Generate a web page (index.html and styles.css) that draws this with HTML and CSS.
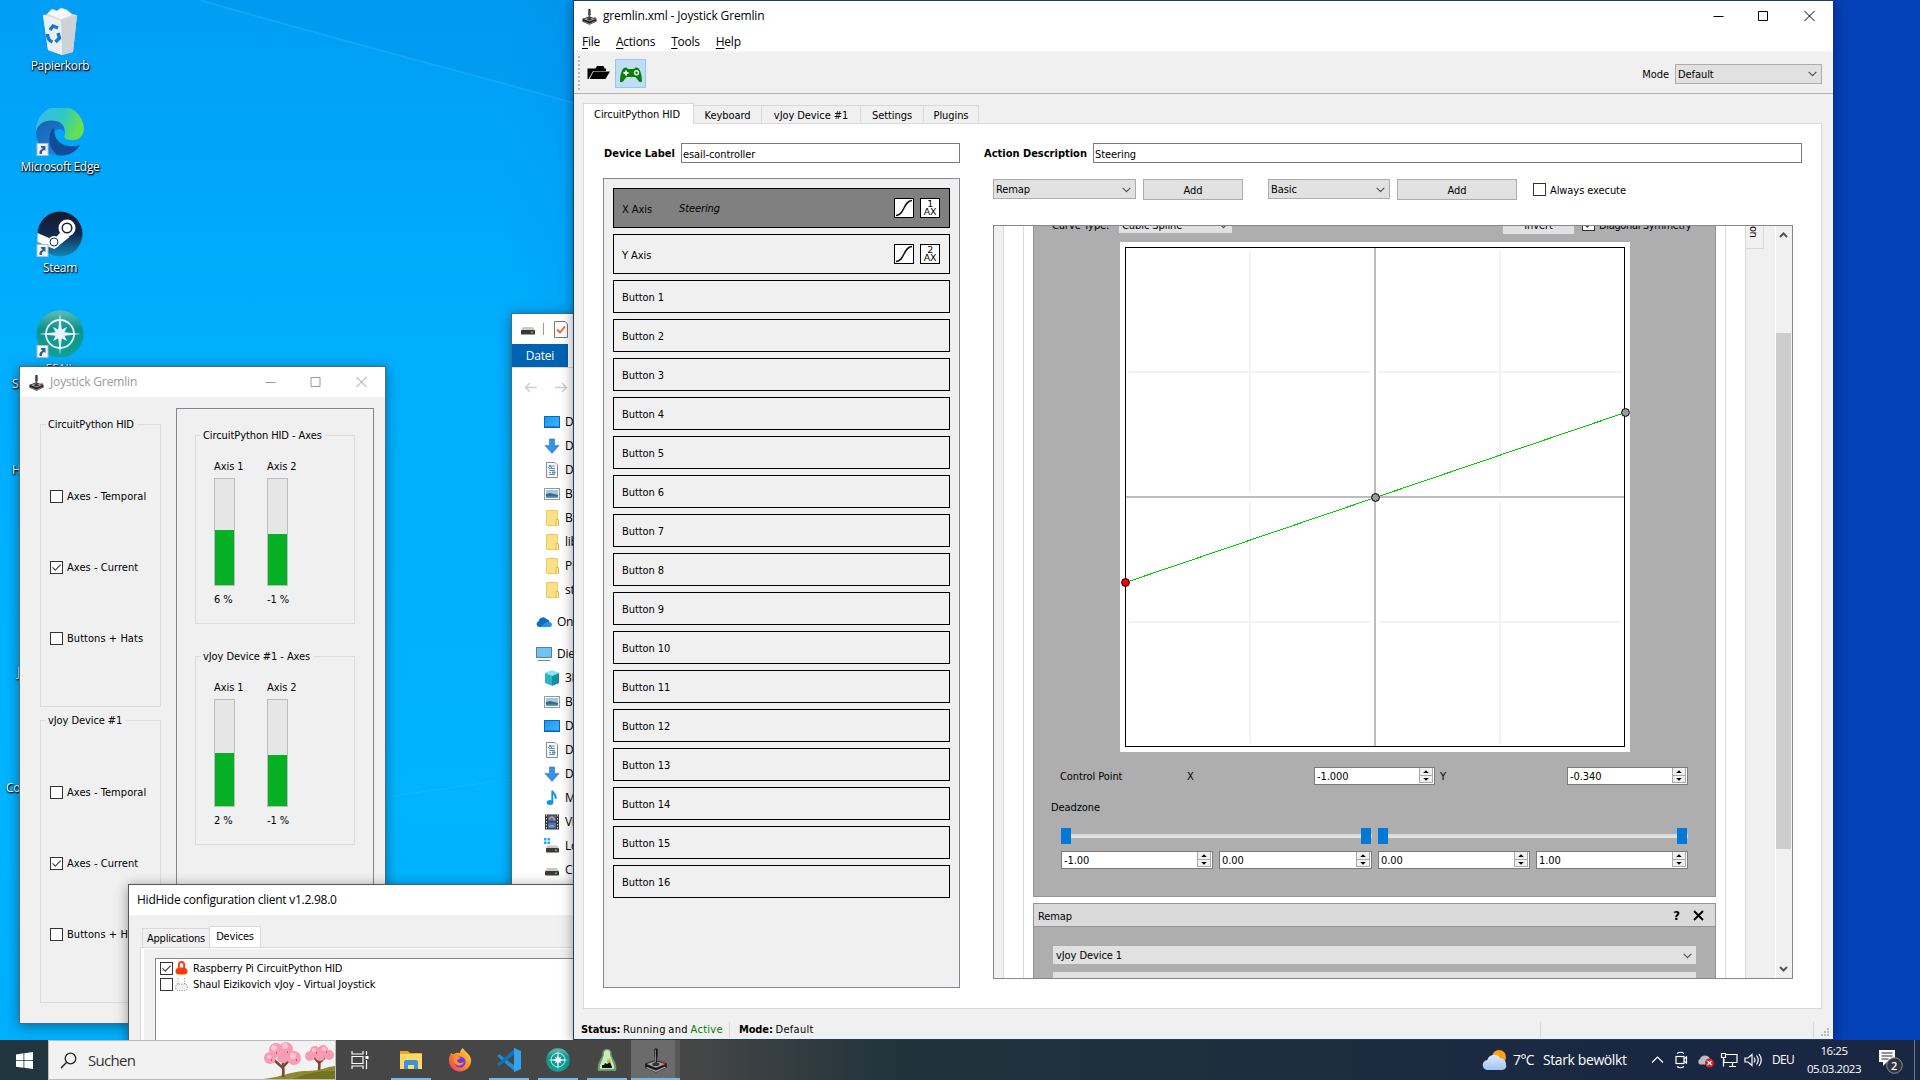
FILE: index.html
```html
<!DOCTYPE html>
<html lang="de">
<head>
<meta charset="utf-8">
<title>Desktop</title>
<link rel="stylesheet" href="styles.css">
</head>
<body>
<svg class="defs" width="0" height="0">
  <defs>
    <linearGradient id="g-steam" x1="0" y1="0" x2="0" y2="1"><stop offset="0" stop-color="#151a2c"/><stop offset=".5" stop-color="#10294f"/><stop offset="1" stop-color="#1387b8"/></linearGradient>
    <linearGradient id="g-edge1" x1="0" y1="0" x2="1" y2=".3"><stop offset="0" stop-color="#37b8f2"/><stop offset=".6" stop-color="#2fc8c4"/><stop offset="1" stop-color="#67e04f"/></linearGradient>
    <linearGradient id="g-edge2" x1="0" y1="0" x2=".6" y2="1"><stop offset="0" stop-color="#1b5fae"/><stop offset="1" stop-color="#1a86dc"/></linearGradient>
    <linearGradient id="g-esail" x1="0" y1="0" x2="0" y2="1"><stop offset="0" stop-color="#5fbcb4"/><stop offset=".4" stop-color="#0b938a"/><stop offset="1" stop-color="#11a296"/></linearGradient>
    <linearGradient id="g-fox" x1="1" y1="0" x2="0" y2="1"><stop offset="0" stop-color="#ffe14a"/><stop offset=".5" stop-color="#ff8a2a"/><stop offset="1" stop-color="#f0306a"/></linearGradient>
    <linearGradient id="g-screen" x1="0" y1="0" x2="1" y2="1"><stop offset="0" stop-color="#0f9af2"/><stop offset="1" stop-color="#46b4ff"/></linearGradient>
    <linearGradient id="g-cloud" x1="0" y1="0" x2="0" y2="1"><stop offset="0" stop-color="#dfeafc"/><stop offset="1" stop-color="#9fc3f3"/></linearGradient>
    <symbol id="joystick" viewBox="0 0 16 18"><path d="M.5 11.500L7.500 9l8 2.500v2.700L8 17.700.5 14.500z" fill="#1c1c1c"/><path d="M1.500 11.700l6-2 7 2-6.500 2.600z" fill="#a2a2a2"/><path d="M1.500 14.200L8 16.800l6.500-2.900" stroke="#b4b4b4" fill="none" stroke-width=".8"/><rect x="6.700" y="1" width="2.400" height="6.500" rx=".9" fill="#111"/><rect x="7" y="6" width="1.800" height="6" fill="#222"/><path d="M7.500 1.800v9" stroke="#b0b0b0" stroke-width=".6"/><ellipse cx="7.900" cy="12" rx="2.500" ry="1.200" fill="#333"/><path d="M12.500 9.800h2v1.600h-2z" fill="#d22"/></symbol>
    <symbol id="link" viewBox="0 0 12 13"><rect x=".5" y=".5" width="11" height="12" fill="#f4f6f8" stroke="#b4bcc4"/><path d="M3 11c-.4-3 .8-4.500 3-5.200L4.500 4.300 4.300 3H9v5L7.600 7C6 7.500 5.300 8.800 5.500 11z" fill="#2b5fa8"/></symbol>
    <symbol id="esail" viewBox="0 0 48 48"><circle cx="24" cy="24" r="23.500" fill="url(#g-esail)"/><circle cx="24" cy="24" r="14" fill="none" stroke="#e8f2fa" stroke-width="1.800"/><path d="M24 3l1.800 16.500L31 17l-2.500 5.200L45 24l-16.500 1.800L31 31l-5.200-2.500L24 45l-1.800-16.500L17 31l2.500-5.200L3 24l16.500-1.800L17 17l5.200 2.500z" fill="#e8f2fa"/></symbol>
    <symbol id="chev" viewBox="0 0 9 6"><path d="M.7.8L4.500 4.600 8.300.8" fill="none" stroke="#555" stroke-width="1.200"/></symbol>
    <symbol id="tick" viewBox="0 0 13 13"><path d="M2.500 6.300l2.800 2.900 5.300-5.600" fill="none" stroke="#444" stroke-width="1.200"/></symbol>
    <symbol id="curve" viewBox="0 0 20 20"><rect x=".5" y=".5" width="19" height="19" fill="#fff" stroke="#000"/><path d="M2 17.500C11 17 9 3 18 2.500" fill="none" stroke="#111" stroke-width="1.500"/></symbol>
    <symbol id="arrows" viewBox="0 0 14 15"><rect width="14" height="15" fill="#f0f0f0"/><path d="M.5 0v15M13.500 0v15M0 7.500h14M0 14.500h14" stroke="#a9a9a9" fill="none"/><path d="M4.200 5L7 2.200 9.800 5zM4.200 10L7 12.800 9.800 10z" fill="#000"/></symbol>
    <symbol id="i-desk" viewBox="0 0 16 16"><rect x=".5" y="2.500" width="15" height="11" fill="url(#g-screen)" stroke="#0a6cb8"/><path d="M1 13h14" stroke="#0a5a9c"/></symbol>
    <symbol id="i-down" viewBox="0 0 16 16"><path d="M5.500 1h5v6.500H15L8 15.500 1 7.500h4.500z" fill="#3690e6" stroke="#2a78c8" stroke-width=".6"/></symbol>
    <symbol id="i-doc" viewBox="0 0 16 16"><path d="M2.500.5H11l2.500 2.500v12.500h-11z" fill="#fff" stroke="#8c8c8c"/><path d="M7 4h4M5 6.500h6M5 8.500h6M5 10.500h2M5 12.500h6" stroke="#6d8fa8"/><path d="M4.500 6l1.500-3 1.500 3" stroke="#1686c8" fill="none"/><rect x="8" y="9.500" width="3.500" height="2" fill="#2c98d8"/></symbol>
    <symbol id="i-pic" viewBox="0 0 16 16"><rect x=".5" y="2.500" width="15" height="11" fill="#fff" stroke="#8e9aa2"/><rect x="2" y="4" width="12" height="8" fill="#9cc8ee"/><path d="M2 8l4-1 8 2v3H2z" fill="#3b6d70"/><path d="M2 10.500h12V12H2z" fill="#5f9ad0"/></symbol>
    <symbol id="i-fold" viewBox="0 0 16 16"><path d="M2.500.5h11v15h-11z" fill="#fbe08a" stroke="#eccb58"/><path d="M12 9.500h2.500v6H12z" fill="#fbe9a8" stroke="#e6c04a"/></symbol>
    <symbol id="i-one" viewBox="0 0 16 16"><path d="M3 13a3 3 0 0 1-.4-5.800A4.500 4.500 0 0 1 10.500 5a3.500 3.500 0 0 1 3 3A2.600 2.600 0 0 1 13.500 13z" fill="#0f6cc4"/><path d="M4 13l6-4.500c3-1 6 0 5.900 2.300A2.300 2.300 0 0 1 13.500 13z" fill="#2196e8"/></symbol>
    <symbol id="i-pc" viewBox="0 0 16 16"><rect x=".5" y="1.500" width="15" height="10" fill="#6cc4f8" stroke="#5c7c90"/><path d="M1.500 14.500h13" stroke="#7c96a6" stroke-width="1.200"/></symbol>
    <symbol id="i-3d" viewBox="0 0 16 16"><path d="M1 3l7-2.500L15 3v10l-7 2.700L1 13z" fill="#2bb4c8"/><path d="M8 6.500L15 3v10l-7 2.700z" fill="#158da4"/><path d="M1 3l7-2.500L15 3 8 6z" fill="#8fe4ee"/></symbol>
    <symbol id="i-mus" viewBox="0 0 16 16"><ellipse cx="6" cy="12.500" rx="3.300" ry="2.500" fill="#1592e8"/><path d="M8.300 12.500V.8c.6 3 4.600 3.400 3.200 8" stroke="#1592e8" stroke-width="1.900" fill="none"/></symbol>
    <symbol id="i-vid" viewBox="0 0 16 16"><rect x="1" y=".5" width="14" height="15" fill="#333"/><path d="M2.500 1v15M13.500 1v15" stroke="#ddd" stroke-dasharray="1.500 1.500"/><rect x="4" y="1.500" width="8" height="6" fill="#4868c0"/><rect x="4" y="8.500" width="8" height="6" fill="#3a78c8"/><path d="M5 5l3-2 3 3M5 12h5" stroke="#e8a020" stroke-width="1.500" fill="none"/></symbol>
    <symbol id="i-drv" viewBox="0 0 16 16"><path d="M3 6h10l2 3.500H1z" fill="#c9c9c9"/><rect x="1" y="9" width="14" height="4.500" rx=".8" fill="#3a3a3a"/><rect x="11" y="10.500" width="2" height="1.500" fill="#3ad04a"/></symbol>
    <symbol id="i-win" viewBox="0 0 16 16"><path d="M0 0h2.500v2.500H0zM3.500 0H6v2.500H3.500zM0 3.500h2.500V6H0zM3.500 3.500H6V6H3.500z" fill="#18b0f0"/><path d="M3 7.500h10l2 3H2z" fill="#c9c9c9"/><rect x="2" y="10" width="13" height="4.500" rx=".8" fill="#3a3a3a"/><rect x="11" y="11.500" width="2" height="1.500" fill="#3ad04a"/></symbol>
  </defs>
</svg>
<div class="desktop">
  <svg class="wallray" width="1920" height="1080" viewBox="0 0 1920 1080"><path d="M200 0L574 103V0z" fill="#0078dc" opacity=".13"/><path d="M200 0C330 38 450 68 574 103" stroke="#3cb8ff" stroke-width="2" opacity=".3" fill="none"/><path d="M385 797L512 779" stroke="#4cd0ff" opacity=".2"/></svg>

  <div class="dicon d1"><svg width="48" height="48" viewBox="0 0 48 48"><path d="M7 8l17-3 17 3-4 37-11 3-14-5z" fill="#dfe4e8"/><path d="M25 13l16-5-4 37-11 3z" fill="#cdd2d6"/><path d="M7 8l18 5 1 35-14-5z" fill="#eceff1"/><path d="M11 7l5-5 5 2 4-3 6 2 6 5-12 5z" fill="#f8f8f8" stroke="#c8c8c8" stroke-width=".7"/><path d="M14 23l3-4 5 2M11.500 27c0 4 2 7 5 8M22 26l1.500 5-4 4" stroke="#1478cc" stroke-width="3.400" fill="none"/></svg><span>Papierkorb</span></div>
  <div class="dicon d2"><svg width="48" height="48" viewBox="0 0 48 48"><path d="M0 24A24 24 0 0 1 48 20c0 8-5 12-11 12-7 0-10-2-8-6C31 15 14 9 0 24z" fill="url(#g-edge1)"/><path d="M0 24C2 14 12 11 20 13c8 2 9 8 8 10-7-5-12 1-11 7 1 9 8 17 13 17A24 24 0 0 1 0 24z" fill="url(#g-edge2)"/><path d="M17 20c-6 8-5 19 4 27 10 2 19-3 23-10-8 3-20 1-24-7-2-4-1-8-3-10z" fill="#114c96"/><use href="#link" x="0" y="35" width="13" height="13"/></svg><span>Microsoft Edge</span></div>
  <div class="dicon d3"><svg width="48" height="48" viewBox="0 0 48 48"><circle cx="24" cy="25" r="22.500" fill="url(#g-steam)"/><path d="M1.500 24l16 7 9-10 7 7-10 8-5 4-8-3-9-4z" fill="#fff"/><circle cx="31" cy="19" r="8.500" fill="#fff"/><circle cx="31" cy="19" r="5.500" fill="#12213f"/><circle cx="31" cy="19" r="4" fill="#fff"/><circle cx="18" cy="33" r="6" fill="#fff"/><circle cx="18" cy="33" r="4" fill="none" stroke="#12305f"/><use href="#link" x="0" y="35" width="13" height="13"/></svg><span>Steam</span></div>
  <div class="dicon d4"><svg width="48" height="48" viewBox="0 0 48 48"><use href="#esail" width="48" height="48"/><use href="#link" x="0" y="35" width="13" height="13"/></svg><span>ESAIL</span></div>
  <span class="dlabel l1">St</span><span class="dlabel l2">Hid</span><span class="dlabel l3">Joy</span><span class="dlabel l4">Control</span>

  <section class="win monitor">
    <header class="title muted"><svg width="15" height="17"><use href="#joystick"/></svg><span>Joystick Gremlin</span>
      <svg class="wbtn" width="102" height="12" viewBox="0 0 102 12"><path d="M.5 6.500h10M46 1.500h9v9h-9zM91.500 1l10 10M101.500 1l-10 10" fill="none" stroke="#999"/></svg></header>
    <div class="monbody">
      <div class="moncol">
        <fieldset class="grp"><legend>CircuitPython HID</legend>
          <label><i class="cb"></i>Axes - Temporal</label><label><i class="cb"><svg><use href="#tick"/></svg></i>Axes - Current</label><label><i class="cb"></i>Buttons + Hats</label></fieldset>
        <fieldset class="grp"><legend>vJoy Device #1</legend>
          <label><i class="cb"></i>Axes - Temporal</label><label><i class="cb"><svg><use href="#tick"/></svg></i>Axes - Current</label><label><i class="cb"></i>Buttons + Hats</label></fieldset>
      </div>
      <div class="monframe">
        <fieldset class="axgrp"><legend>CircuitPython HID - Axes</legend><div class="axes">
          <div class="ax"><span>Axis 1</span><div class="bar"><b style="height:55px"></b></div><span>6 %</span></div>
          <div class="ax"><span>Axis 2</span><div class="bar"><b style="height:51px"></b></div><span>-1 %</span></div></div></fieldset>
        <fieldset class="axgrp"><legend>vJoy Device #1 - Axes</legend><div class="axes">
          <div class="ax"><span>Axis 1</span><div class="bar"><b style="height:53px"></b></div><span>2 %</span></div>
          <div class="ax"><span>Axis 2</span><div class="bar"><b style="height:51px"></b></div><span>-1 %</span></div></div></fieldset>
      </div>
    </div>
  </section>

  <section class="win explorer">
    <div class="exq"><svg width="16" height="16"><use href="#i-drv"/></svg><i></i><svg width="14" height="17" viewBox="0 0 14 17"><path d="M.5.500H11l2.500 2.500v13.500H.5z" fill="#fff" stroke="#777"/><path d="M3 8.500l3 3 5-6" stroke="#e8602c" stroke-width="1.800" fill="none"/></svg></div>
    <div class="exrib"><span>Datei</span></div>
    <svg class="exnav" width="44" height="11" viewBox="0 0 44 11"><path d="M13 5.500H1.500M6 1L1.500 5.500 6 10M31 5.500h11.500M38 1l4.500 4.500L38 10" stroke="#d0d0d0" stroke-width="1.500" fill="none"/></svg>
    <ul class="tree">
      <li><svg><use href="#i-desk"/></svg>Desktop</li><li><svg><use href="#i-down"/></svg>Downloads</li><li><svg><use href="#i-doc"/></svg>Dokumente</li><li><svg><use href="#i-pic"/></svg>Bilder</li><li><svg><use href="#i-fold"/></svg>Bilder</li><li><svg><use href="#i-fold"/></svg>lib</li><li><svg><use href="#i-fold"/></svg>Pictures</li><li><svg><use href="#i-fold"/></svg>static</li>
      <li class="root"><svg><use href="#i-one"/></svg>OneDrive</li><li class="root"><svg><use href="#i-pc"/></svg>Dieser PC</li>
      <li><svg><use href="#i-3d"/></svg>3D-Objekte</li><li><svg><use href="#i-pic"/></svg>Bilder</li><li><svg><use href="#i-desk"/></svg>Desktop</li><li><svg><use href="#i-doc"/></svg>Dokumente</li><li><svg><use href="#i-down"/></svg>Downloads</li><li><svg><use href="#i-mus"/></svg>Musik</li><li><svg><use href="#i-vid"/></svg>Videos</li><li><svg><use href="#i-win"/></svg>Lokaler</li><li><svg><use href="#i-drv"/></svg>CIRCUITPY</li>
    </ul>
  </section>

  <section class="win hid">
    <header class="title"><span>HidHide configuration client v1.2.98.0</span></header>
    <div class="hidtabs"><span>Applications</span><span class="on">Devices</span></div>
    <div class="hidpage"><div class="hidlist">
      <div><i class="cb"><svg><use href="#tick"/></svg></i><svg width="13" height="14" viewBox="0 0 13 14"><path d="M3 7V3.500a3.500 3.500 0 0 1 7 0V7c1.500 0 2.500 1.500 2.500 3.500S11 13.500 9.500 13.500h-6C2 13.500.5 12.500.5 10.500S1.500 7 3 7z" fill="#ff3a0c"/><path d="M4.800 6.500V3.800a1.700 1.700 0 0 1 3.400 0v2.700z" fill="#fff"/></svg><span>Raspberry Pi CircuitPython HID</span></div>
      <div><i class="cb"></i><svg width="13" height="14" viewBox="0 0 13 14"><path d="M3 7V1M9.500 7V1M3 7C1 7 .5 9 .5 10.500s1 3 3 3h6c2 0 3-1 3-3S11.500 7 9.500 7z" fill="#f0f0f0" stroke="#888" stroke-dasharray="1 1.500"/></svg><span>Shaul Eizikovich vJoy - Virtual Joystick</span></div>
    </div></div>
  </section>

  <section class="win main">
    <header class="title"><svg width="15" height="17"><use href="#joystick"/></svg><span>gremlin.xml - Joystick Gremlin</span>
      <svg class="wbtn" width="102" height="12" viewBox="0 0 102 12"><path d="M.5 6.500h10M45.500 1.500h9v9h-9zM91.500 1l10 10M101.500 1l-10 10" fill="none" stroke="#000"/></svg></header>
    <nav class="menu"><span><u>F</u>ile</span><span><u>A</u>ctions</span><span><u>T</u>ools</span><span><u>H</u>elp</span></nav>
    <div class="tools">
      <i class="grip"></i>
      <svg width="24" height="16" viewBox="0 0 24 16"><path d="M.5 14V3.500h8L10 1h6.500l1 2.500H19v2.500H6L1.500 14z" fill="#000"/><path d="M6.500 6.500H23L18.500 14H2.500z" fill="#000"/></svg>
      <div class="run"><svg width="24" height="18" viewBox="0 0 24 18"><path d="M5 2C7 1 8 1.500 9 3h6c1-1.500 2-2 4-1 2.500 1.500 4 8 4 13-.5 1.500-2 1.500-3 .5L16.500 11h-9L4 15.500C3 16.500 1.500 16.500 1 15 1 10 2.500 3.500 5 2z" fill="#068206"/><path d="M7 4.500v5M4.500 7h5" stroke="#fff" stroke-width="1.800"/><circle cx="17.500" cy="6.700" r="2.600" fill="#fff"/><circle cx="17.500" cy="6.700" r="1.300" fill="#068206"/></svg></div>
      <span class="modelab">Mode</span><div class="combo c-mode">Default<svg><use href="#chev"/></svg></div>
    </div>
    <div class="tabs"><span class="on t1">CircuitPython HID</span><span class="t2">Keyboard</span><span class="t3">vJoy Device #1</span><span class="t4">Settings</span><span class="t5">Plugins</span></div>
    <div class="page">
      <div class="left">
        <div class="frow"><b class="w78">Device Label</b><div class="inp">esail-controller</div></div>
        <div class="inputs">
          <div class="it axis sel"><span>X Axis</span><em>Steering</em><svg><use href="#curve"/></svg><p>1<br>AX</p></div>
          <div class="it axis"><span>Y Axis</span><em></em><svg><use href="#curve"/></svg><p>2<br>AX</p></div>
          <div class="it">Button 1</div><div class="it">Button 2</div><div class="it">Button 3</div><div class="it">Button 4</div><div class="it">Button 5</div><div class="it">Button 6</div><div class="it">Button 7</div><div class="it">Button 8</div><div class="it">Button 9</div><div class="it">Button 10</div><div class="it">Button 11</div><div class="it">Button 12</div><div class="it">Button 13</div><div class="it">Button 14</div><div class="it">Button 15</div><div class="it">Button 16</div>
        </div>
      </div>
      <div class="right">
        <div class="frow"><b class="w109">Action Description</b><div class="inp">Steering</div></div>
        <div class="acts"><div class="combo c1">Remap<svg><use href="#chev"/></svg></div><div class="btn b1">Add</div><div class="combo c2">Basic<svg><use href="#chev"/></svg></div><div class="btn b2">Add</div><i class="cb"></i><span>Always execute</span></div>
        <div class="scroll">
          <div class="p2"><div class="p3">
            <div class="card first">
              <div class="ctl"><span class="ct">Curve Type:</span><div class="combo flat cs">Cubic Spline<svg><use href="#chev"/></svg></div><div class="btn inv">Invert</div><i class="cb"><svg><use href="#tick"/></svg></i><span class="ds">Diagonal Symmetry</span></div>
              <svg class="graph" width="510" height="510" viewBox="0 0 510 510"><rect width="510" height="510" fill="#fff"/>
                <path d="M130 9v242M130 259v242M380 9v242M380 259v242M9 130h242M259 130h242M9 380h242M259 380h242" stroke="#f2f2f2" stroke-width="2"/>
                <path d="M255 6v498M6 255h498" stroke="#bdbdbd" stroke-width="2"/>
                <rect x="5.500" y="5.500" width="499" height="499" fill="none" stroke="#000"/>
                <path d="M5.500 340.500L255.500 255.500 505.500 170.500" stroke="#0c0" fill="none" stroke-width="1" shape-rendering="crispEdges"/>
                <g stroke="#000" fill="#9a9a9e"><circle cx="5.500" cy="340.500" r="3.900" fill="#f00"/><circle cx="255.500" cy="255.500" r="3.900"/><circle cx="505.500" cy="170.500" r="3.900"/></g></svg>
              <div class="cp"><span>Control Point</span><span>X</span><div class="spin">-1.000<svg><use href="#arrows"/></svg></div><span class="y">Y</span><div class="spin">-0.340<svg><use href="#arrows"/></svg></div></div>
              <div class="dz">Deadzone</div>
              <div class="sliders"><div class="sl"><i></i><i></i></div><div class="sl sl2"><i></i><i></i></div></div>
              <div class="dzs"><div class="spin">-1.00<svg><use href="#arrows"/></svg></div><div class="spin">0.00<svg><use href="#arrows"/></svg></div><div class="spin">0.00<svg><use href="#arrows"/></svg></div><div class="spin">1.00<svg><use href="#arrows"/></svg></div></div>
            </div>
            <div class="card second">
              <div class="chead"><span>Remap</span><b>?</b><svg width="11" height="11" viewBox="0 0 11 11"><path d="M1 1l9 9M10 1l-9 9" stroke="#000" stroke-width="1.900"/></svg></div>
              <div class="combo flat cw">vJoy Device 1<svg><use href="#chev"/></svg></div>
              <div class="combo flat cw"></div>
            </div>
          </div></div>
          <div class="vtabs"><span>on</span></div>
          <div class="sb"><svg width="9" height="8" viewBox="0 0 9 8"><path d="M1 6l3.500-3.500L8 6" fill="none" stroke="#555" stroke-width="2"/></svg><i></i><svg width="9" height="8" viewBox="0 0 9 8"><path d="M1 2l3.500 3.500L8 2" fill="none" stroke="#555" stroke-width="2"/></svg></div>
        </div>
      </div>
    </div>
    <footer class="status"><span><b>Status:</b> Running and <span class="green">Active</span></span><i class="s1"></i><span><b>Mode:</b> Default</span><i class="s2"></i><i class="s3"></i><svg width="9" height="9" viewBox="0 0 9 9"><path d="M6 0h2v2H6zM3 3h2v2H3zM6 3h2v2H6zM0 6h2v2H0zM3 6h2v2H3zM6 6h2v2H6z" fill="#bcbcbc"/></svg></footer>
  </section>

  <footer class="taskbar">
    <div class="start"><svg width="17" height="17" viewBox="0 0 17 17"><path d="M0 2.400l7.500-1.100v6.900H0zM8.300 1.200L17 0v8.200H8.300zM0 9h7.500v6.800L0 14.700zM8.300 9H17v8l-8.700-1.200z" fill="#fff"/></svg></div>
    <div class="search"><svg width="17" height="17" viewBox="0 0 17 17"><circle cx="10.500" cy="6.500" r="5.300" fill="none" stroke="#222" stroke-width="1.300"/><path d="M6.500 10.500L1 16" stroke="#222" stroke-width="1.400"/></svg><span>Suchen</span>
      <svg class="trees" width="72" height="38" viewBox="0 0 72 38"><path d="M0 38C20 36 28 30 44 30S64 25 74 25V38z" fill="#8c8a2c"/><path d="M30 38c18-8 30-8 44-8v8z" fill="#74741f"/><path d="M20 36c1-6 0-10 0-17M20 27l-9-8M21 25l8-9M56 29c1-5 0-8 0-13M56 22l-5-6M57 21l6-6" stroke="#7a4a32" stroke-width="2.600" fill="none"/><g fill="#f79cb4"><circle cx="7" cy="17" r="6"/><circle cx="13" cy="9" r="7"/><circle cx="23" cy="8" r="7"/><circle cx="31" cy="17" r="7"/><circle cx="20" cy="16" r="6"/><circle cx="47" cy="15" r="5"/><circle cx="52" cy="10" r="5"/><circle cx="60" cy="9" r="5"/><circle cx="66" cy="14" r="5"/><circle cx="57" cy="15" r="5"/></g><g fill="#ffc4d2"><circle cx="11" cy="7" r="3"/><circle cx="22" cy="5" r="3"/><circle cx="30" cy="15" r="3"/><circle cx="6" cy="16" r="2"/><circle cx="51" cy="9" r="2"/><circle cx="61" cy="8" r="2"/></g><path d="M13 12h1M24 11h1M33 19h1M8 19h1M53 12h1M63 11h1" stroke="#e0506e" stroke-width="2"/></svg></div>
    <div class="tk tv"><svg width="18" height="18" viewBox="0 0 18 18"><path d="M1 0v3h11V0M1 18v-3h11v3M1 5.500h11v7H1zM15.500 0v4M15.500 9v9" fill="none" stroke="#fff" stroke-width="1.200"/><rect x="14.500" y="5" width="3" height="3" fill="#fff"/></svg></div>
    <div class="tk u"><svg width="22" height="20" viewBox="0 0 22 20"><path d="M0 1h8l2 2h12v14H0z" fill="#e8a820"/><path d="M0 4h22v15H0z" fill="#ffd968"/><path d="M4 19v-7c0-1 .6-2 2-2h10c1.400 0 2 1 2 2v7h-4v-4H8v4z" fill="#3a94dc"/></svg></div>
    <div class="tk"><svg width="24" height="24" viewBox="0 0 24 24"><path d="M3 5c1 1 2 1 3 1C8 4 11 5 12 5c0-3 2-4 3-5 1 3 7 6 8 11 1 7-5 12.500-11 12.500S0 18 1 11c.3-3 1.500-4 2-6z" fill="url(#g-fox)"/><circle cx="12" cy="14" r="5.500" fill="#6a3be0"/><path d="M5 9c3-2 6 0 8 1l-4 2c0 3 4 4 7 2-1 4-8 5-10 0z" fill="#ff9228"/></svg></div>
    <div class="tk u"><svg width="24" height="24" viewBox="0 0 24 24"><path d="M0 8l2.500-1.800L18 18v5.500z" fill="#1f8fdc"/><path d="M0 16L18 .5V6L2.500 17.800z" fill="#1572ba"/><path d="M17 0l7 3v18l-7 3z" fill="#34a5f0"/></svg></div>
    <div class="tk u"><svg width="24" height="24"><use href="#esail"/></svg></div>
    <div class="tk u"><svg width="20" height="24" viewBox="0 0 20 24"><path d="M10 1c3 0 5 2 4.500 6L18 14c1 3 2 6 1 9H1c-1-3 0-6 1-9l3.500-7C5 3 7 1 10 1z" fill="#6f9a6a"/><path d="M10 2c2.500 0 3.500 2 3 5l3 8c1 2 1.500 4 1 6h-14c-.5-2 0-4 1-6l3-8C6.500 4 7.500 2 10 2z" fill="#c4ecb8"/><path d="M5 20v-3h2l1-2 2 1 3-2 2 5v1z" fill="#111"/><path d="M10 12l3-1 .5 3-3 1z" fill="#f0a020"/></svg></div>
    <div class="tk u act"><svg width="24" height="26"><use href="#joystick"/></svg></div>
    <div class="tray">
      <svg class="wx" width="26" height="22" viewBox="0 0 26 22"><circle cx="17" cy="8" r="7" fill="#f8a018"/><path d="M6 21a5 5 0 0 1-.6-10A7 7 0 0 1 18 9a6 6 0 0 1 6 6.500A4 4 0 0 1 20 21z" fill="url(#g-cloud)"/></svg>
      <span class="deg">7°C</span><span class="cond">Stark bewölkt</span>
      <svg class="sys" width="112" height="20" viewBox="0 0 112 20" fill="none" stroke="#fff" stroke-width="1.200"><path d="M1 12.500L6.500 7 12 12.500"/><rect x="25" y="6.500" width="8" height="7"/><path d="M33 9l2.500-2v6L33 11M26 3.500Q29.500 1 33 3.500M26 16.500Q29.500 19 33 16.500"/><path d="M49 14.500a3 3 0 0 1 0-5.500c1-4 8-5 10 0 3 1 3 5 0 5.500z" fill="#b9bdc2" stroke="none"/><circle cx="58.500" cy="13" r="4.500" fill="#d8202c" stroke="none"/><path d="M56.500 11l4 4M60.500 11l-4 4"/><path d="M75 4.500h11v8H73V9M78 16.500h7M81.500 12.500v4M70.500 3.500h4v4h-4zM72.500 7.500v9"/><path d="M94 8h3l4-3.500v11L97 12h-3zM103 7.500q2 2.500 0 5M105.500 5.500q3.500 4.500 0 9M108 4q4.500 6 0 12"/></svg>
      <span class="lang">DEU</span><span class="clock">16:25<br>05.03.2023</span>
      <div class="note"><svg width="26" height="26" viewBox="0 0 26 26"><path d="M1 2h16v12h-8l-4 4v-4H1z" fill="#fff"/><path d="M3.500 5h11M3.500 8h11M3.500 11h7" stroke="#1a2740" stroke-width="1.200"/><circle cx="16.500" cy="17.500" r="7.800" fill="#303540" stroke="#8a8f98"/></svg><b>2</b></div>
      <i class="peek"></i>
    </div>
  </footer>
</div>
</body>
</html>
```
FILE: styles.css
```css
* { box-sizing: border-box; }
body { margin: 0; font-family: "DejaVu Sans Condensed", "DejaVu Sans", sans-serif; font-stretch: condensed; font-size: 11px; letter-spacing: -0.08px; line-height: 14px; color: #000; }
svg { display: block; flex: none; }
p, ul, fieldset { margin: 0; padding: 0; }
.defs { position: absolute; }
.desktop { position: relative; width: 1920px; height: 1080px; overflow: hidden; background: linear-gradient(90deg, transparent 500px, #0440b8 1800px), linear-gradient(180deg, #009ef5, #00aefe 330px, #00b4ff 800px, #00aefc); }
.wallray { position: absolute; left: 0; top: 0; }

.dicon { position: absolute; left: 0; width: 120px; height: 66px; display: flex; flex-direction: column; align-items: center; color: #fff; }
.dicon span, .dlabel { font: 12px/16px "Open Sans", "Noto Sans", sans-serif; letter-spacing: -0.3px; color: #fff; text-shadow: 0 1px 2px #000, 1px 1px 1px #000; white-space: nowrap; }
.dicon span { margin-top: 3px; }
.d1 { top: 7px; } .d2 { top: 108px; } .d3 { top: 209px; } .d4 { top: 310px; }
.dlabel { position: absolute; }
.l1 { left: 12px; top: 376px; } .l2 { left: 12px; top: 462px; } .l3 { left: 17px; top: 664px; } .l4 { left: 6px; top: 780px; }

.win { position: absolute; background: #f0f0f0; border: 1px solid #4b6a80; box-shadow: 0 2px 12px #0006; white-space: nowrap; }
.title { display: flex; align-items: center; height: 30px; padding-left: 8px; background: #fff; font: 12px/16px "Open Sans", "Noto Sans", sans-serif; letter-spacing: -0.15px; }
.title span { margin-left: 6px; }
.title .wbtn { margin-left: auto; }
.muted { color: #999; }
.cb { display: block; flex: none; width: 13px; height: 13px; background: #fff; border: 1px solid #333; }
.cb svg { width: 13px; height: 13px; margin: -1px; }

/* device monitor */
.monitor { left: 19px; top: 366px; width: 367px; height: 658px; }
.monitor .title .wbtn { margin-right: 18px; }
.monitor .title { padding-left: 9px; }
.monbody { display: flex; padding: 11px 10px 0 20px; gap: 15px; }
.moncol { width: 121px; display: flex; flex-direction: column; gap: 6px; padding-top: 9px; }
.grp, .axgrp { border: 1px solid #dcdcdc; min-width: 0; }
legend { padding: 0 3px 0 2px; line-height: 16px; height: 14px; }
.grp { height: 290px; padding: 58px 0 0 9px; }
.grp legend { margin-left: -4px; }
.grp label { display: flex; align-items: center; gap: 4px; height: 14px; padding-top: 2px; margin-bottom: 57px; letter-spacing: 0.05px; }
.grp .cb { margin-top: -2px; }
.monframe { width: 198px; height: 610px; border: 1px solid #828790; padding: 19px 18px 0; }
.axgrp { height: 196px; margin-bottom: 25px; padding: 18px 0 0 18px; }
.axgrp legend { margin-left: -13px; }
.axes { display: flex; }
.ax { display: flex; flex-direction: column; width: 53px; }
.bar { width: 21px; height: 108px; margin: 4px 0 7px; background: #e6e6e6; border: 1px solid #bcbcbc; display: flex; align-items: flex-end; }
.bar b { display: block; width: 100%; background: #06b025; }

/* explorer */
.explorer { left: 511px; top: 313px; width: 200px; height: 700px; background: #fff; font-family: "Open Sans", "Noto Sans", sans-serif; font-stretch: normal; font-size: 12px; letter-spacing: -0.3px; overflow: hidden; }
.exq { display: flex; align-items: center; height: 30px; padding-left: 8px; }
.exq i { width: 1px; height: 12px; background: #999; margin: 0 11px 0 7px; }
.exq svg:last-child { margin-left: -1px; }
.exrib { height: 24px; border-bottom: 1px solid #d8dadc; }
.exrib span { display: block; width: 56px; height: 23px; background: #0063b1; color: #fff; text-align: center; line-height: 23px; letter-spacing: -0.2px; }
.exnav { margin: 14px 0 0 12px; }
.tree { list-style: none; padding-top: 17px; }
.tree li { display: flex; align-items: center; height: 24px; padding-left: 32px; gap: 5px; }
.tree li svg { width: 16px; height: 16px; }
.tree .root { padding-left: 24px; margin-top: 8px; }

/* HidHide */
.hid { left: 128px; top: 884px; width: 500px; height: 190px; border-color: #555; }
.hid .title { padding-left: 2px; letter-spacing: -0.25px; }
.hidtabs { display: flex; align-items: flex-end; height: 21px; margin: 11px 0 0 13px; }
.hidtabs span { height: 19px; border: 1px solid #d9d9d9; border-bottom: 0; width: 68px; text-align: center; line-height: 20px; letter-spacing: -0.2px; }
.hidtabs .on { height: 21px; width: 52px; background: #fff; margin-left: -1px; }
.hidpage { border-top: 1px solid #d9d9d9; border-left: 1px solid #d9d9d9; margin-left: 11px; background: #f0f0f0; box-shadow: inset 3px 1px #fff; padding: 10px 0 0 14px; }
.hidlist { background: #fff; border: 1px solid #828790; height: 150px; padding: 1px 0 0 4px; }
.hidlist div { display: flex; align-items: center; height: 16px; }
.hidlist span { margin-left: 5px; padding-top: 1px; letter-spacing: -0.1px; }
.hidlist > div > svg { margin-left: 2px; }

/* main window */
.main { left: 573px; top: 0; width: 1260px; height: 1040px; border: 1px solid #1a3f68; border-right: 0; }
.main > .title .wbtn { margin-right: 18px; }
.menu { display: flex; gap: 16px; height: 22px; padding-left: 8px; background: #fff; border-bottom: 2px solid #f4f4f4; font: 12px/22px "Open Sans", "Noto Sans", sans-serif; letter-spacing: -0.25px; }
.menu u { text-underline-offset: 2px; }
.tools { display: flex; align-items: center; height: 41px; border-bottom: 1px solid #b4b4b4; padding-left: 4px; }
.grip { width: 2px; height: 34px; background: repeating-linear-gradient(#b8b8b8 0 2px, transparent 2px 4px); margin-right: 7px; }
.run { width: 31px; height: 29px; margin-left: 4px; background: #c2dcf3; border: 1px solid #90c8f6; padding: 6px 0 0 3px; }
.tools > svg { width: 24px; }
.modelab { margin-left: auto; margin-right: 6px; padding-top: 3px; }
.combo { display: flex; align-items: center; justify-content: space-between; height: 20px; background: #e1e1e1; border: 1px solid #adadad; padding: 2px 4px 0 2px; }
.combo svg { width: 9px; height: 6px; margin-top: -1px; }
.c-mode { width: 147px; margin: 1px 11px 0 0; }
.tabs { display: flex; align-items: flex-end; height: 21px; margin: 9px 0 0 9px; position: relative; z-index: 1; }
.tabs span { height: 19px; border: 1px solid #d9d9d9; border-left: 0; text-align: center; line-height: 20px; }
.tabs .on { height: 21px; background: #fff; border-left: 1px solid #d9d9d9; border-bottom: 0; line-height: 22px; padding-right: 3px; }
.t1 { width: 111px; } .t2 { width: 68px; } .t3 { width: 99px; } .t4 { width: 63px; } .t5 { width: 55px; }
.page { display: flex; gap: 24px; height: 886px; margin: -1px 11px 0 9px; background: #fff; border: 1px solid #d9d9d9; padding: 19px; }
.left { width: 357px; }
.frow { display: flex; align-items: center; height: 20px; }
.frow b { letter-spacing: 0; padding: 1px 0 0 1px; }
.w78 { width: 78px; } .w109 { width: 109px; }
.frow .w109 { padding-left: 0; }
.inp { flex: 1; height: 20px; border: 1px solid #7a7a7a; padding: 3px 0 0 1px; line-height: 15px; background: #fff; }
.inputs { margin-top: 15px; height: 810px; background: #f0f0f0; border: 1px solid #828790; padding: 9px; display: flex; flex-direction: column; gap: 6px; }
.it { height: 33px; border: 1px solid #000; padding-left: 8px; line-height: 34px; }
.axis { height: 40px; display: flex; align-items: center; padding-right: 9px; line-height: 14px; }
.axis span { width: 57px; padding-top: 3px; }
.axis em { flex: 1; padding-top: 1px; letter-spacing: -0.1px; }
.axis svg { width: 20px; height: 20px; }
.axis p { width: 20px; height: 20px; margin-left: 6px; background: #fff; border: 1px solid #000; font: 9.500px/8px "DejaVu Sans", sans-serif; text-align: center; padding-top: 1px; letter-spacing: -0.3px; }
.sel { background: #808080; }
.right { flex: 1; min-width: 0; }
.acts { display: flex; align-items: flex-start; margin: 16px 0 0 9px; height: 21px; }
.c1 { width: 143px; } .c2 { width: 122px; margin-left: 25px; }
.btn { background: #e1e1e1; border: 1px solid #adadad; text-align: center; height: 21px; line-height: 21px; }
.b1 { width: 100px; margin-left: 7px; } .b2 { width: 120px; margin-left: 7px; }
.acts .cb { margin: 4px 4px 0 16px; }
.acts span { padding-top: 5px; }
.scroll { display: flex; margin: 25px 0 0 9px; width: 800px; height: 754px; border: 1px solid #828790; background: #f0f0f0; overflow: hidden; padding-left: 9px; }
.p2 { width: 743px; padding: 0 19px; background: #fff; border: 1px solid #d9d9d9; border-width: 0 1px; }
.p3 { padding: 0 9px; border: 1px solid #d9d9d9; border-width: 0 1px; height: 752px; overflow: hidden; }
.card { background: #aeaeae; border: 1px solid #949494; }
.first { border-top: 0; height: 671px; }
.ctl { display: flex; align-items: flex-start; height: 16px; overflow: hidden; padding-left: 18px; }
.ctl > * { margin-top: -11px; }
.ct, .ds { padding-top: 4px; } .ct { width: 67px; }
.ds { letter-spacing: -0.35px; }
.combo.flat { border: 0; height: 18px; padding: 2px 4px 0 3px; }
.combo.flat.cs { width: 113px; padding-top: 4px; }
.inv { width: 71px; height: 19px; border: 0; margin-left: 271px; line-height: 22px; }
.ctl .cb { margin: -8px 4px 0 8px; }
.graph { margin-left: 86px; }
.cp { display: flex; align-items: center; height: 18px; margin: 15px 0 0 26px; }
.cp > span { width: 127px; padding-top: 2px; }
.cp > .y { width: 132px; padding-left: 5px; }
.spin { display: flex; justify-content: space-between; width: 121px; height: 18px; border: 1px solid #7a7a7a; background: #fff; line-height: 18px; padding-left: 2px; }
.spin svg { width: 14px; height: 15px; margin-right: 1px; }
.dz { margin: 16px 0 0 17px; height: 13px; }
.sliders { display: flex; gap: 6px; margin: 14px 0 0 27px; }
.sl { width: 311px; height: 16px; display: flex; justify-content: space-between; background: linear-gradient(#d6d6d6, #e7eaea) 0 6px / 100% 4px no-repeat; padding-right: 1px; }
.sl2 { width: 310px; }
.sl i { width: 10px; height: 16px; background: #0078d7; }
.dzs { display: grid; grid-template-columns: 152px 153px 152px 152px; gap: 6px; margin: 7px 0 0 27px; }
.dzs .spin { width: auto; }
.second { margin-top: 6px; height: 200px; }
.chead { display: flex; align-items: center; height: 23px; background: #dadada; border-bottom: 1px solid #949494; padding: 0 11px 0 4px; }
.chead span { padding-top: 3px; }
.chead b { margin: 1px 13px 0 auto; font-size: 13px; }
.cw { margin: 19px 19px -11px; }
.vtabs { width: 30px; border-right: 1px solid #fff; }
.vtabs span { display: block; width: 18px; height: 23px; writing-mode: vertical-rl; border: 1px solid #d9d9d9; border-width: 0 1px 1px 0; line-height: 20px; letter-spacing: -0.6px; }
.sb { flex: 1; display: flex; flex-direction: column; align-items: center; padding: 5px 1px 5px 0; }
.sb i { width: 100%; height: 516px; background: #cdcdcd; margin-top: 94px; margin-bottom: auto; }
.status { display: flex; align-items: center; height: 30px; padding: 12px 3px 0 7px; letter-spacing: 0.3px; word-spacing: -0.8px; }
.status b { letter-spacing: -0.1px; }
.status > i { width: 1px; height: 16px; background: #d7d7d7; }
.green { color: #008000; }
.s1 { margin: 0 9px 0 6px; }
.s2 { margin-left: auto; margin-right: 272px; }
.status svg { margin: 4px 0 0 7px; }

/* taskbar */
.taskbar { position: absolute; left: 0; right: 0; bottom: 0; height: 40px; display: flex; background: linear-gradient(90deg, #464646 690px, #20333b 900px, #1e2e3e 1250px, #1a2742 1600px); font-family: "Open Sans", "Noto Sans", sans-serif; font-stretch: normal; color: #fff; white-space: nowrap; }
.start { width: 48px; background: #20353e; padding: 12px 0 0 16px; }
.search { width: 288px; background: #f2f2f2; border: 1px solid #bbb; display: flex; align-items: center; padding-left: 11px; color: #333; font-size: 15px; letter-spacing: -0.7px; }
.search span { margin-left: 11px; }
.trees { margin-left: auto; }
.tk { width: 49px; padding: 0 5px; display: flex; align-items: center; justify-content: center; }
.tk.tv { width: 48px; margin-right: 2px; }
.tk.u { background: linear-gradient(#76b9ed, #76b9ed) 50% 100% / 40px 2px no-repeat; }
.tk.act { background: linear-gradient(#76b9ed, #76b9ed) 0 100% / 100% 2px no-repeat, linear-gradient(90deg, #6b6b6b 44px, #585858 44px); }
.tray { margin-left: auto; display: flex; align-items: center; font-size: 12px; }
.deg { font-size: 14px; letter-spacing: -0.6px; margin-left: 5px; width: 30px; }
.cond { font-size: 14px; letter-spacing: -0.4px; width: 108px; }
.lang { margin-left: 9px; width: 34px; letter-spacing: -0.7px; }
.clock { width: 56px; text-align: center; font-size: 11.5px; line-height: 18px; letter-spacing: -0.45px; }
.note { position: relative; margin-left: 16px; padding-top: 2px; }
.note b { position: absolute; left: 13px; top: 13px; font-size: 11px; font-weight: 600; }
.peek { width: 1px; height: 40px; background: #70798a; margin: 0 5px 0 10px; }
```
